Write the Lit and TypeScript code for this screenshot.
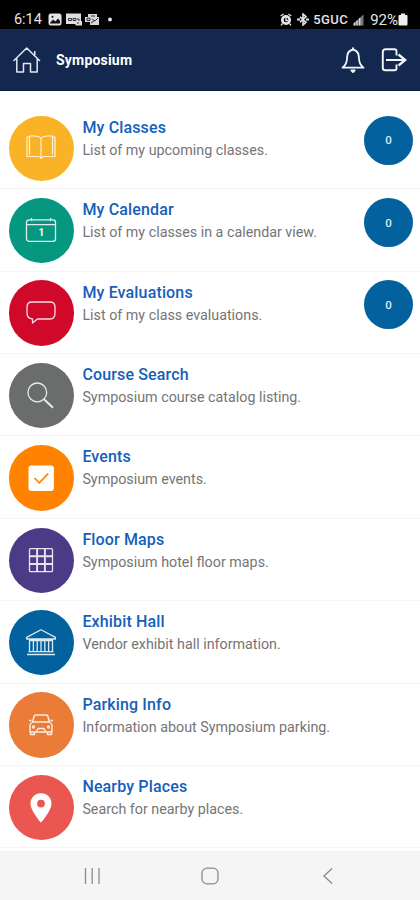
import { LitElement, html, svg, css, TemplateResult } from "lit";
import { customElement, property } from "lit/decorators.js";
import { styleMap } from "lit/directives/style-map.js";

interface Entry {
  title: string;
  text: string;
  color: string;
  icon: TemplateResult;
  count?: number;
}

const line = (body: unknown) => html`<svg class="glyph" viewBox="0 0 32 32" width="32" height="32"
  fill="none" stroke="#fff" stroke-opacity=".86" stroke-width="1.3" stroke-linejoin="round">${body}</svg>`;

const book = line(svg`<path d="M16 6.500C14.500 4.500 12 4 9 4H4.500V5H2V24.500H12.500C14.500 24.500 15 25.200 16 26.300C17 25.200 17.500 24.500 19.500 24.500H30V5H27.500V4H23C20 4 17.500 4.500 16 6.500ZM16 6.500V26M4.500 5V22.700M27.500 5V22.700" stroke-width="1.150"/>`);
const calendar = html`<span class="cal">${line(svg`<rect x="1.500" y="4.800" width="29" height="21.600" rx="2.600"/><path d="M2 9.700H30M6.500 3V6M25.500 3V6"/>`)}<b>1</b></span>`;
const bubble = line(svg`<path d="M7 5H25Q30 5 30 10V16Q30 22 25 22H12.500L7.500 26V22Q2 21.500 2 16V10Q2 5 7 5Z"/>`);
const search = line(svg`<circle cx="12.300" cy="12.400" r="9.400"/><path d="M19 19.200L28 27.800" stroke-width="1.900"/>`);
const check = html`<svg class="glyph" viewBox="0 0 32 32" width="32" height="32"><rect x="3.500" y="3.500" width="25.400" height="25.500" rx="3" fill="#fff"/><path d="M9.500 16L14.300 20.800L23.200 11.700" fill="none" stroke="#fb8500" stroke-width="1.700"/></svg>`;
const grid = line(svg`<rect x="4.500" y="4.700" width="23" height="23" rx="1"/><path d="M12.100 5V28M19.900 5V28M4.500 12.300H27.500M4.500 20H27.500" stroke-width="1.900"/>`);
const hall = line(svg`<path d="M1.600 12V10.400L16 2.800L30.400 10.400V12ZM4 13.500H28M3.500 24.700H28.500M2 27.500H30M4.500 13V25M8.400 13V25M12.200 13V25M16 13V25M19.800 13V25M23.600 13V25M27.500 13V25"/>`);
const car = line(svg`<path d="M7.500 13L9.300 6.700Q9.700 6 11 6H21Q22.300 6 22.700 6.700L24.500 13ZM7.500 13Q5 14.500 5 16.500V23H27V16.500Q27 14.500 24.500 13M5.500 23V25.500H9.500V23M22.500 23V25.500H26.500V23M11.500 22.500L13 19.500H19L20.500 22.500M4 11.500H6.500M25.500 11.500H28" stroke-width="1.400"/><circle cx="8.500" cy="18" r="1"/><circle cx="23.500" cy="18" r="1"/>`);
const pin = html`<svg class="glyph" viewBox="0 0 32 32" width="32" height="32"><path fill="#fff" fill-rule="evenodd" d="M16 1.300C9.800 1.300 5.500 6 5.500 11.600C5.500 19 16 30.700 16 30.700S26.500 19 26.500 11.600C26.500 6 22.200 1.300 16 1.300ZM16 7.700A3.900 3.900 0 1 1 16 15.500A3.900 3.900 0 1 1 16 7.700Z"/></svg>`;

const entries: Entry[] = [
  { title: "My Classes", text: "List of my upcoming classes.", color: "#fab327", icon: book, count: 0 },
  { title: "My Calendar", text: "List of my classes in a calendar view.", color: "#069781", icon: calendar, count: 0 },
  { title: "My Evaluations", text: "List of my class evaluations.", color: "#d0082a", icon: bubble, count: 0 },
  { title: "Course Search", text: "Symposium course catalog listing.", color: "#6b6d6c", icon: search },
  { title: "Events", text: "Symposium events.", color: "#ff8300", icon: check },
  { title: "Floor Maps", text: "Symposium hotel floor maps.", color: "#4b3a85", icon: grid },
  { title: "Exhibit Hall", text: "Vendor exhibit hall information.", color: "#03619d", icon: hall },
  { title: "Parking Info", text: "Information about Symposium parking.", color: "#ea7c38", icon: car },
  { title: "Nearby Places", text: "Search for nearby places.", color: "#ea5750", icon: pin },
];

@customElement("menu-row")
export class MenuRow extends LitElement {
  @property({ attribute: false }) entry!: Entry;

  static styles = css`
    :host { display: flex; box-sizing: border-box; height: 82.4px; padding: 8.800px 7px 0 8.800px; border-bottom: 1px solid #f5f5f5; }
    .disc { width: 65.4px; height: 65.4px; border-radius: 50%; display: grid; place-items: center; flex: none; }
    .glyph { display: block; }
    .cal { display: grid; place-items: center; }
    .cal > * { grid-area: 1 / 1; }
    .cal b { font-size: 10px; line-height: 10px; color: #fff; padding-top: 4px; }
    .words { flex: 1; padding: 2.200px 0 0 8.200px; white-space: nowrap; }
    .title { font-size: 16px; font-weight: 500; line-height: 20px; letter-spacing: .15px; color: #1560ba; }
    .text { font-size: 14.3px; line-height: 20px; padding-top: 2px; color: #757575; }
    .count { width: 49px; height: 49px; border-radius: 50%; background: #03619d; color: #dceaf5; display: grid; place-items: center; font-size: 11.5px; font-weight: 500; flex: none; }
  `;

  render() {
    const e = this.entry;
    return html`
      <div class="disc" style=${styleMap({ background: e.color })}>${e.icon}</div>
      <div class="words">
        <div class="title">${e.title}</div>
        <div class="text">${e.text}</div>
      </div>
      ${e.count === undefined ? null : html`<div class="count">${e.count}</div>`}
    `;
  }
}

@customElement("app-root")
export class AppRoot extends LitElement {
  static styles = css`
    :host { display: flex; flex-direction: column; width: 420px; height: 900px; overflow: hidden; background: #fff; font-family: Roboto, "Liberation Sans", sans-serif; }
    svg { display: block; flex: none; }
    .status { height: 29px; box-sizing: border-box; padding: 10px 12px 0 14px; display: flex; align-items: center; background: #000; color: #e4e4e4; flex: none; white-space: nowrap; }
    .time { font-size: 14.4px; width: 34px; }
    .left { display: flex; gap: 3.500px; align-items: center; flex: 1; }
    .net { font-size: 13px; font-weight: 500; letter-spacing: .4px; margin: 0 5px 0 4px; }
    .pct { font-size: 15px; margin-left: 6px; }
    .gap { margin-right: 5px; }
    .bar { height: 62px; box-sizing: border-box; padding: 1px 13px 0 12px; display: flex; align-items: center; background: #14284f; border-bottom: 1.500px solid #0b1c42; color: #fff; flex: none; }
    .name { flex: 1; padding: 0 0 1px 14px; font-size: 14px; font-weight: 700; letter-spacing: .2px; }
    .bell { margin-right: -1px; }
    .exit { margin-left: 17px; }
    .list { flex: 1; min-height: 0; padding-top: 15.900px; }
    .nav { height: 49px; flex: none; background: #f5f5f5; display: flex; align-items: center; padding: 1px 83px 0; box-sizing: border-box; justify-content: space-between; }
  `;

  render() {
    return html`
      <div class="status">
        <span class="time">6:14</span>
        <div class="left">
          <svg width="14" height="13" viewBox="0 0 14 13"><rect x=".5" y=".5" width="13" height="12" rx="2.500" fill="#e4e4e4"/><path d="M2 10L5 6.500L7.500 8.500L10 5.500L12 8V10.500H2Z" fill="#111"/><circle cx="4.500" cy="3.800" r="1" fill="#111"/></svg>
          <svg width="16" height="13" viewBox="0 0 16 13"><path d="M0 .5H15V8H16V12.500H10L9 11H0Z" fill="#dedede"/><path d="M2.500 7.500V5.500H5.500V7.500ZM7 7.500V5.500H10V7.500ZM11 6H13V8M11 10H13" fill="none" stroke="#333" stroke-width="1"/></svg>
          <svg width="14" height="13" viewBox="0 0 14 13"><path d="M3 1H12V4H14V12H5V9H0V4H3Z" fill="#d8d8d8"/><path d="M2 5.200H5V7.500H2ZM7 6L10 8L13 5M6 3H10M6 10L9 8" fill="none" stroke="#333"/></svg>
          <svg width="12" height="13" viewBox="0 0 12 13"><circle cx="7" cy="6.500" r="1.900" fill="#e4e4e4"/></svg>
        </div>
        <svg class="gap" width="12" height="13" viewBox="0 0 12 13"><circle cx="6" cy="7" r="3.700" fill="none" stroke="#e4e4e4" stroke-width="2.700"/><path d="M.7 3L3.500 1M11.300 3L8.500 1M2.500 10.500L1 12.300M9.500 10.500L11 12.300M6 5V7.500H8" fill="none" stroke="#e4e4e4" stroke-width="1.300"/></svg>
        <svg width="12" height="13" viewBox="0 0 12 13"><path d="M3 3.800L9 9.200L6 12V1L9 3.800L3 9.200" fill="none" stroke="#e4e4e4" stroke-width="1.600"/><path d="M0 6.500H3M9 6.500H12" stroke="#e4e4e4" stroke-width="1.900"/></svg>
        <span class="net">5GUC</span>
        <svg width="11" height="12" viewBox="0 0 11 12"><path d="M0 11.500V10L10.500 .5V11.500Z" fill="#777"/><path d="M1.500 11.500V8.500M4 11.500V6.500M6.700 11.500V4" stroke="#ddd" stroke-width="1.300"/></svg>
        <span class="pct">92%</span>
        <svg width="10" height="13" viewBox="0 0 10 13"><path d="M3 .5H7V2H8.500Q9.500 2 9.500 3V11.500Q9.500 12.500 8.500 12.500H1.500Q.5 12.500 .5 11.500V3Q.5 2 1.500 2H3Z" fill="#eee"/></svg>
      </div>
      <div class="bar">
        <svg width="30" height="28" viewBox="0 0 30 28" fill="none" stroke="#e3e8f2" stroke-width="1.500" stroke-linejoin="round"><path d="M1.500 15L14.700 2L28 15M4.800 12.500V26H11.500V17.500H18.500V26H25.200V12.500M22.800 5V9"/></svg>
        <span class="name">Symposium</span>
        <svg class="bell" width="24" height="28" viewBox="0 0 24 28" fill="none" stroke="#f2f5fa" stroke-width="1.800" stroke-linejoin="round"><path d="M12 3.500C7.500 4.500 6 7.500 6 12C6 17 4.500 19.500 1.500 21.700H22.500C19.500 19.500 18 17 18 12C18 7.500 16.500 4.500 12 3.500Z"/><path d="M12 1.500V4" stroke-width="2"/><path d="M10.300 24.300H13.700L12 26Z" fill="#fff"/></svg>
        <svg class="exit" width="26" height="28" viewBox="0 0 26 28" fill="none" stroke="#f2f5fa" stroke-width="1.900"><path d="M15.500 9.500V5.500Q15.500 3.300 13.500 3.300H4.500Q1.800 3.300 1.800 6V22Q1.800 24.300 4.500 24.300H13.500Q15.500 24.300 15.500 22.500V18.500M5 14H22"/><path d="M17.500 8.500L24.300 14L17.500 19.500" stroke-width="2.300"/></svg>
      </div>
      <div class="list">${entries.map((e) => html`<menu-row .entry=${e}></menu-row>`)}</div>
      <div class="nav">
        <svg width="18" height="18" viewBox="0 0 18 18" stroke="#8c8c8c" stroke-width="1.300"><path d="M2.500 1V17M9.200 1V17M16 1V17"/></svg>
        <svg width="18" height="18" viewBox="0 0 18 18" fill="none" stroke="#8c8c8c" stroke-width="1.300"><rect x="1" y="1.200" width="16" height="15.600" rx="5"/></svg>
        <svg width="18" height="18" viewBox="0 0 18 18" fill="none" stroke="#8c8c8c" stroke-width="1.400"><path d="M13 1.500L5 9L13 16.500"/></svg>
      </div>
    `;
  }
}
